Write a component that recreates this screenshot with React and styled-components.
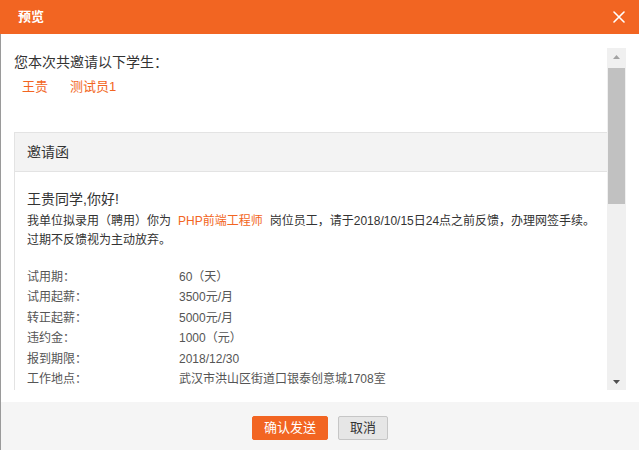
import styled, { createGlobalStyle } from "styled-components";

const GlobalStyle = createGlobalStyle`
	html, body {
		margin: 0;
		padding: 0;
		background: #ffffff;
	}
	body {
		font-family: "Liberation Sans", "Noto Sans CJK SC", sans-serif;
		color: #333;
	}
`;

const orange = "#f26522";

const students = ["王贵", "测试员1"];

const terms = [
	["试用期：", "60（天）"],
	["试用起薪：", "3500元/月"],
	["转正起薪：", "5000元/月"],
	["违约金：", "1000（元）"],
	["报到期限：", "2018/12/30"],
	["工作地点：", "武汉市洪山区街道口银泰创意城1708室"],
];

const App = () => {
	return (
		<>
			<GlobalStyle />
			<Dialog>
				<TitleBar>
					<Title>预览</Title>
					<CloseButton aria-label="关闭">
						<svg width="12" height="12" viewBox="0 0 12 12">
							<path
								d="M1 1 L11 11 M11 1 L1 11"
								stroke="#fff"
								strokeWidth="1.6"
								strokeLinecap="round"
							/>
						</svg>
					</CloseButton>
				</TitleBar>
				<Body>
					<ScrollBox>
						<ScrollContent>
							<Lead>您本次共邀请以下学生：</Lead>
							<Names>
								{students.map((name) => (
									<Name key={name}>{name}</Name>
								))}
							</Names>
							<Card>
								<CardHead>邀请函</CardHead>
								<CardBody>
									<Greeting>王贵同学,你好!</Greeting>
									<Paragraph>
										我单位拟录用（聘用）你为
										<Highlight>PHP前端工程师</Highlight>
										岗位员工，请于2018/10/15日24点之前反馈，办理网签手续。
										<br />
										过期不反馈视为主动放弃。
									</Paragraph>
									<Terms>
										{terms.map(([label, value]) => (
											<Term key={label}>
												<TermLabel>{label}</TermLabel>
												<TermValue>{value}</TermValue>
											</Term>
										))}
									</Terms>
								</CardBody>
							</Card>
						</ScrollContent>
						<ScrollBar>
							<ScrollArrow>
								<svg width="7" height="4" viewBox="0 0 7 4">
									<path d="M0 4 L3.5 0 L7 4 Z" fill="#a3a3a3" />
								</svg>
							</ScrollArrow>
							<ScrollTrack>
								<ScrollThumb />
							</ScrollTrack>
							<ScrollArrow>
								<svg width="7" height="4" viewBox="0 0 7 4">
									<path d="M0 0 L3.5 4 L7 0 Z" fill="#505050" />
								</svg>
							</ScrollArrow>
						</ScrollBar>
					</ScrollBox>
				</Body>
				<Footer>
					<Button primary="true">确认发送</Button>
					<Button>取消</Button>
				</Footer>
			</Dialog>
		</>
	);
};

const Dialog = styled.div`
	width: 639px;
	height: 450px;
	display: flex;
	flex-direction: column;
	overflow: hidden;
	background: #fff;
`;

const TitleBar = styled.div`
	height: 34px;
	flex: none;
	background: ${orange};
	display: flex;
	align-items: center;
	justify-content: space-between;
	padding: 0 14px 0 18px;
`;

const Title = styled.div`
	color: #fff;
	font-size: 13px;
	font-weight: 700;
	line-height: 34px;
`;

const CloseButton = styled.button`
	border: none;
	background: none;
	padding: 0;
	width: 12px;
	height: 12px;
	display: flex;
	cursor: pointer;
`;

const Body = styled.div`
	flex: 1;
	min-height: 0;
	display: flex;
	padding: 14px 13px 12px 1px;
	border-left: 1px solid #9a9a9a;
`;

const ScrollBox = styled.div`
	flex: 1;
	display: flex;
	min-width: 0;
`;

const ScrollContent = styled.div`
	flex: 1;
	min-width: 0;
	overflow: hidden;
	padding: 5px 0 0 12px;
`;

const Lead = styled.div`
	font-size: 14px;
	line-height: 18px;
	color: #333;
`;

const Names = styled.div`
	display: flex;
	gap: 22px;
	padding: 7px 0 0 8px;
`;

const Name = styled.span`
	font-size: 13px;
	line-height: 18px;
	color: ${orange};
`;

const Card = styled.div`
	margin-top: 36px;
	border: 1px solid #e3e3e3;
	border-right: none;
`;

const CardHead = styled.div`
	height: 38px;
	line-height: 38px;
	padding-left: 12px;
	font-size: 14px;
	color: #333;
	background: #f3f3f3;
	border-bottom: 1px solid #e3e3e3;
`;

const CardBody = styled.div`
	padding: 18px 12px 12px 12px;
`;

const Greeting = styled.div`
	font-size: 14px;
	line-height: 18px;
	color: #333;
`;

const Paragraph = styled.p`
	margin: 4px 0 0;
	font-size: 12px;
	line-height: 19px;
	color: #333;
	white-space: nowrap;
`;

const Highlight = styled.span`
	color: ${orange};
	margin: 0 7px;
`;

const Terms = styled.div`
	margin-top: 17px;
	display: flex;
	flex-direction: column;
`;

const Term = styled.div`
	display: grid;
	grid-template-columns: 152px 1fr;
	font-size: 12px;
	line-height: 20.4px;
`;

const TermLabel = styled.span`
	color: #555;
`;

const TermValue = styled.span`
	color: #555;
`;

const ScrollBar = styled.div`
	width: 19px;
	flex: none;
	display: flex;
	flex-direction: column;
	background: #f0f0f0;
`;

const ScrollArrow = styled.div`
	height: 17px;
	flex: none;
	display: flex;
	align-items: center;
	justify-content: center;
`;

const ScrollTrack = styled.div`
	flex: 1;
	padding: 3px 1px 0;
`;

const ScrollThumb = styled.div`
	height: 136px;
	background: #c1c1c1;
`;

const Footer = styled.div`
	height: 48px;
	flex: none;
	background: #f5f5f5;
	border-left: 1px solid #9a9a9a;
	display: flex;
	justify-content: center;
	align-items: center;
	gap: 10px;
	padding-top: 3px;
	box-sizing: border-box;
`;

const Button = styled.button`
	height: 24px;
	padding: 0 ${({ primary }) => (primary ? "11px" : "11px")};
	font-family: "Liberation Sans", "Noto Sans CJK SC", sans-serif;
	font-size: 13px;
	line-height: 22px;
	border-radius: 2px;
	cursor: pointer;
	color: ${({ primary }) => (primary ? "#fff" : "#333")};
	background: ${({ primary }) => (primary ? orange : "#e6e6e6")};
	border: 1px solid ${({ primary }) => (primary ? orange : "#c6c6c6")};
`;

export default App;
